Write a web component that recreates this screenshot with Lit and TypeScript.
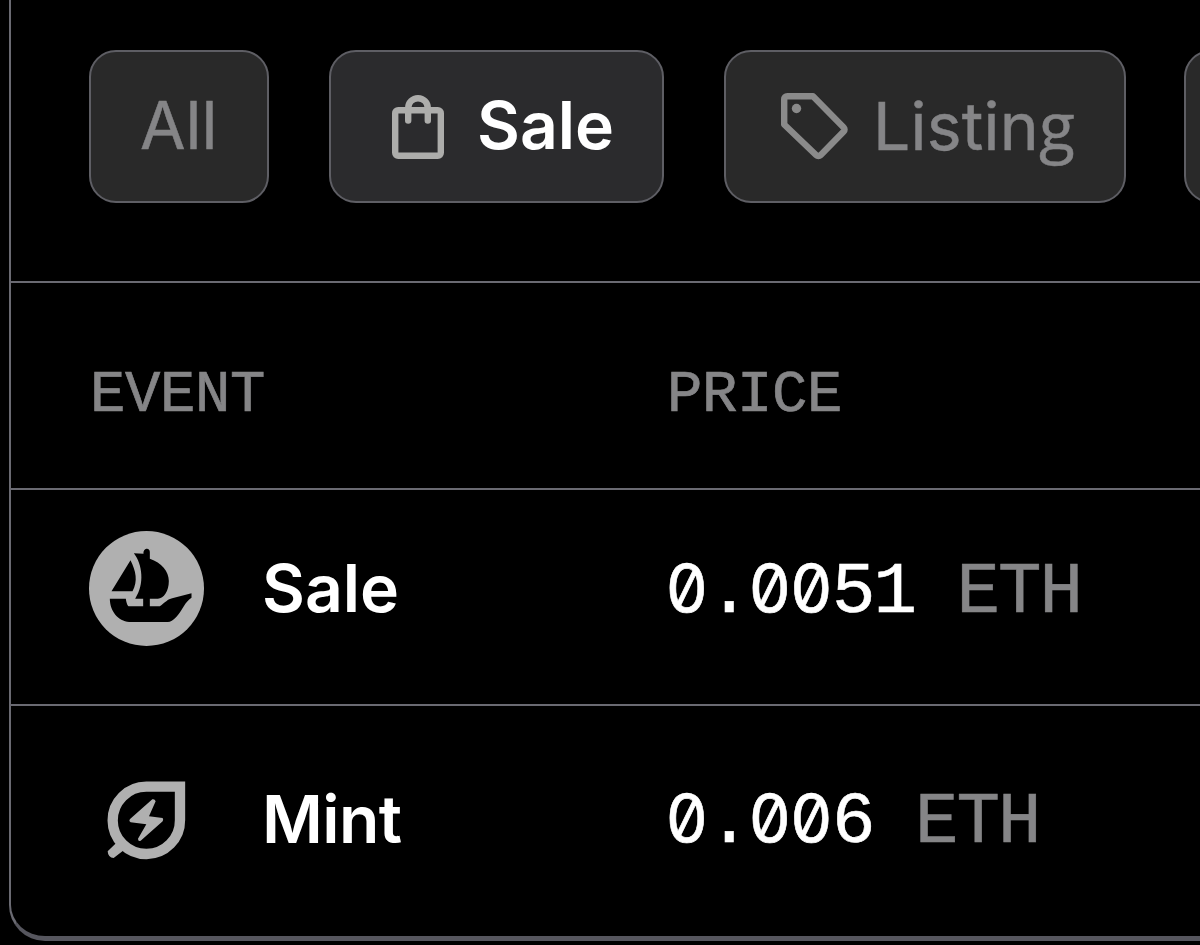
import { LitElement, html, css, svg } from 'lit'
import { customElement, property } from 'lit/decorators.js'

const icons = {
  bag: svg`
    <rect x="4.2" y="17.2" width="45.6" height="45.6" rx="3" />
    <path d="M17.2 27.5V15a9.8 9.8 0 0 1 19.6 0v12.5" />
  `,
  tag: svg`
    <path
      d="M3.2 6.2a3 3 0 0 1 3-3H32L62.700 34.400a3 3 0 0 1 0 4.2L39.5 62.200a3 3 0 0 1-4.2 0L3.2 31.5z"
      stroke-linejoin="round"
    />
    <circle class="dot" cx="15.5" cy="15.500" r="4.7" />
  `,
}

@customElement('filter-chip')
export class FilterChip extends LitElement {
  static styles = css`
    :host {
      box-sizing: border-box;
      flex: none;
      display: flex;
      align-items: center;
      height: 153px;
      padding: 0 49px 4px;
      border: 2px solid #5e5e64;
      border-radius: 27px;
      background: #292929;
      color: #858587;
      font: 400 66px/80px Inter, sans-serif;
    }
    :host([active]) {
      background: #2b2b2d;
      color: #fff;
      font-weight: 600;
    }
    :host([icon]) {
      padding: 0 50px 3px 55px;
    }
    svg {
      width: 67px;
      height: 67px;
      margin: 3px 25px 0 0;
      overflow: visible;
      fill: none;
      stroke: #8a8a8a;
      stroke-width: 6.4;
      stroke-linecap: round;
    }
    :host([active]) svg {
      margin: 2px 19px 0 5px;
      stroke: #adadab;
    }
    .dot {
      fill: #8a8a8a;
      stroke: none;
    }
  `

  @property({ reflect: true })
  icon?: 'bag' | 'tag'

  @property({ type: Boolean, reflect: true })
  active = false

  render() {
    return html`${this.icon
        ? html`<svg viewBox="0 0 67 67">${icons[this.icon]}</svg>`
        : ''}<slot></slot>`
  }
}

@customElement('app-root')
export class AppRoot extends LitElement {
  static styles = css`
    :host {
      display: block;
      height: 945px;
      overflow: hidden;
      background: #000;
    }
    .panel {
      box-sizing: border-box;
      width: 1260px;
      height: 941px;
      margin-left: 9px;
      border: 2px solid #6a6a72;
      border-top: 0;
      border-bottom: 5px solid #56565e;
      border-radius: 0 0 0 36px;
    }
    .filters {
      box-sizing: border-box;
      display: flex;
      gap: 60px;
      height: 283px;
      padding: 50px 0 0 78px;
      border-bottom: 2px solid #6a6a72;
    }
    .all {
      width: 180px;
      -webkit-text-stroke: 0.5px;
    }
    .sale {
      width: 335px;
    }
    .listing {
      width: 402px;
      margin-right: -2px;
      letter-spacing: 0.2px;
      -webkit-text-stroke: 0.5px;
    }
    .g {
      font-family: 'Open Sans', sans-serif;
    }
    .row {
      box-sizing: border-box;
      display: grid;
      grid-template-columns: 577px 1fr;
      align-items: center;
      height: 216px;
      padding: 0 0 18px 78px;
      border-bottom: 2px solid #6a6a72;
    }
    .head {
      height: 207px;
      padding: 21px 0 0 79px;
      color: #858587;
      font: 59px/72px 'Liberation Mono', monospace;
      letter-spacing: -0.4px;
      -webkit-text-stroke: 0.7px;
    }
    .last {
      height: 229px;
      padding-bottom: 4px;
      border: 0;
    }
    .event {
      display: flex;
      align-items: center;
      gap: 58px;
      color: #fff;
      font: 600 66px/80px Inter, sans-serif;
    }
    .last .event {
      letter-spacing: -0.6px;
    }
    .event svg {
      width: 115px;
      height: 115px;
    }
    .price {
      padding-top: 4px;
      color: #fff;
      font: 72.5px/80px 'Liberation Mono', monospace;
      letter-spacing: -2px;
      white-space: pre;
      -webkit-text-stroke: 0.6px;
    }
    .zero {
      display: inline-block;
      width: 41.5px;
      text-align: center;
      letter-spacing: 0;
      font-family: Inter, sans-serif;
      font-size: 66px;
      font-feature-settings: 'zero';
    }
    .unit {
      color: #858587;
    }
  `

  // Liberation Mono dots its zero, Inter has a slashed one
  private amount(value: string) {
    return [...value].map((c) =>
      c === '0' ? html`<span class="zero">0</span>` : c
    )
  }

  render() {
    return html`
      <div class="panel">
        <div class="filters">
          <filter-chip class="all">All</filter-chip>
          <filter-chip class="sale" icon="bag" active>Sale</filter-chip>
          <filter-chip class="listing" icon="tag"
            ><span>Listin<span class="g">g</span></span></filter-chip
          >
          <filter-chip></filter-chip>
        </div>
        <div class="row head"><span>EVENT</span><span>PRICE</span></div>
        <div class="row">
          <div class="event">
            <svg viewBox="7.5 10 345 345">
              <circle cx="180" cy="182.5" r="172.5" fill="#b0b0b0" />
              <path
                d="M75 191L132 98C148 130 155 160 138 191ZM70 213H118C120 228 124 236 128 236H170V213H146C175 170 168 110 142 77L171 78C169 60 191 58 190 74V93C225 105 247 130 247 160C247 190 232 213 214 213H190V236H220C235 225 245 214 257 212L315 197V210C295 222 290 245 270 267Q255 283 244 283H128C95 280 70 250 70 213Z"
              />
            </svg>
            Sale
          </div>
          <div class="price">${this.amount('0.0051')}<span class="unit"> ETH</span></div>
        </div>
        <div class="row last">
          <div class="event">
            <svg viewBox="56 32 345 345">
              <path
                d="M228 109H329V209A101 101 0 1 1 228 109Z"
                fill="none"
                stroke="#b0b0b0"
                stroke-width="31"
              />
              <path
                d="M143 273L112 303Q113 322 130 323L162 298ZM246 147Q253 145 256 153L236 198L277 203Q280 208 277 213L211 271Q203 274 203 265L228 222L181 216Q174 211 180 205Z"
                fill="#b0b0b0"
              />
            </svg>
            Mint
          </div>
          <div class="price">${this.amount('0.006')}<span class="unit"> ETH</span></div>
        </div>
      </div>
    `
  }
}
